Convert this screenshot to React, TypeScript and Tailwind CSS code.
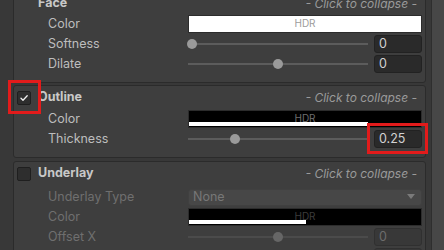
import React from "react";

type Tone = "on" | "off";

function Slider({ pos, tone = "on" }: { pos: number; tone?: Tone }) {
  return (
    <div className="relative w-[180px] h-full flex items-center">
      <div className={`w-full h-[2px] ${tone === "on" ? "bg-[#5c5c5c]" : "bg-[#4b4b4b]"}`} />
      <div
        className={`absolute w-[10px] h-[10px] rounded-full ${tone === "on" ? "bg-[#9a9a9a]" : "bg-[#666666]"}`}
        style={{ left: pos - 5 }}
      />
    </div>
  );
}

function NumberBox({ value, tone = "on" }: { value: string; tone?: Tone }) {
  return (
    <div
      className={`w-[48px] h-[18px] rounded-[3px] border flex items-center pl-[4px] text-[12.5px] ${
        tone === "on"
          ? "bg-[#2a2a2a] border-[#222222] text-[#d2d2d2]"
          : "bg-[#383838] border-[#303030] text-[#6c6c6c]"
      }`}
    >
      {value}
    </div>
  );
}

function ColorField({ fill, bar, tone = "on" }: { fill: "white" | "black"; bar: number; tone?: Tone }) {
  return (
    <div
      className={`relative w-[234px] h-[18px] border border-[#2c2c2c] flex items-center justify-center ${
        fill === "white" ? "bg-white" : "bg-black"
      }`}
    >
      <span
        className={`text-[10px] leading-none mb-[2px] ${
          fill === "white" ? "text-[#9c9c9c]" : tone === "on" ? "text-[#6e6e6e]" : "text-[#3c3c3c]"
        }`}
      >
        HDR
      </span>
      <div className="absolute left-0 bottom-[1px] h-[4px] bg-white" style={{ width: bar }} />
    </div>
  );
}

function Row({ label, tone = "on", children }: { label: string; tone?: Tone; children: React.ReactNode }) {
  return (
    <div className="h-5 flex items-center">
      <div className={`w-[174px] shrink-0 pl-[34px] text-[12.5px] ${tone === "on" ? "text-[#bdbdbd]" : "text-[#6f6f6f]"}`}>
        {label}
      </div>
      <div className="flex-1 h-full flex items-center justify-between pr-[3px]">{children}</div>
    </div>
  );
}

function Checkbox({ checked }: { checked?: boolean }) {
  return (
    <div className="w-[14px] h-[14px] rounded-[2px] bg-[#2e2e2e] border border-[#1f1f1f] flex items-center justify-center">
      {checked && (
        <svg width="10" height="10" viewBox="0 0 10 10">
          <path d="M2 5.2 L4 7.2 L8.2 2.8" fill="none" stroke="#f0f0f0" strokeWidth="1.3" strokeLinecap="round" strokeLinejoin="round" />
        </svg>
      )}
    </div>
  );
}

function Header({ title, box, checked }: { title: string; box?: boolean; checked?: boolean }) {
  return (
    <div className="h-[21px] flex items-center pl-[3px] pr-[8px]">
      <div className="w-[14px]">{box && <Checkbox checked={checked} />}</div>
      <div className="ml-[7px] font-bold text-[12.5px] text-[#c8c8c8]">{title}</div>
      <div className="ml-auto italic text-[12px] text-[#9a9a9a]">- Click to collapse -</div>
    </div>
  );
}

function Section({ className = "", children }: { className?: string; children: React.ReactNode }) {
  return (
    <div className={`border border-[#2b2b2b] rounded-[3px] bg-[#3e3e3e] pt-[1px] pb-2 ${className}`}>{children}</div>
  );
}

export default function App() {
  return (
    <div
      className="relative w-[444px] h-[250px] overflow-hidden bg-[#383838] flex"
      style={{ fontFamily: "Inter, 'Liberation Sans', sans-serif" }}
    >
      {/* left gutter */}
      <div className="w-[13px] shrink-0" />

      {/* sections */}
      <div className="w-[413px] shrink-0 flex flex-col">
        <Section className="-mt-[9px] rounded-t-none">
          <Header title="Face" />
          <Row label="Color">
            <ColorField fill="white" bar={232} />
          </Row>
          <Row label="Softness">
            <Slider pos={4} />
            <NumberBox value="0" />
          </Row>
          <Row label="Dilate">
            <Slider pos={90} />
            <NumberBox value="0" />
          </Row>
        </Section>

        <Section className="mt-[2px]">
          <Header title="Outline" box checked />
          <div className="h-[1px]" />
          <Row label="Color">
            <ColorField fill="black" bar={179} />
          </Row>
          <Row label="Thickness">
            <Slider pos={47} />
            <NumberBox value="0.25" />
          </Row>
        </Section>

        <Section className="mt-[3px]">
          <Header title="Underlay" box />
          <div className="h-[3px]" />
          <Row label="Underlay Type" tone="off">
            <div className="w-[234px] h-[17px] rounded-[3px] bg-[#474747] border border-[#404040] flex items-center pl-[4px] pr-[6px] text-[12.5px] text-[#777777]">
              None
              <svg className="ml-auto" width="8" height="6" viewBox="0 0 8 6">
                <path d="M0 0 H8 L4 5 Z" fill="#7a7a7a" />
              </svg>
            </div>
          </Row>
          <Row label="Color" tone="off">
            <ColorField fill="black" bar={117} tone="off" />
          </Row>
          <Row label="Offset X" tone="off">
            <Slider pos={90} tone="off" />
            <NumberBox value="0" tone="off" />
          </Row>
          <Row label="Offset Y" tone="off">
            <Slider pos={90} tone="off" />
            <NumberBox value="0" tone="off" />
          </Row>
        </Section>
      </div>

      {/* scrollbar */}
      <div className="w-[5px] shrink-0" />
      <div className="w-[1px] shrink-0 bg-[#2e2e2e]" />
      <div className="flex-1 bg-[#474747]" />

      {/* highlight boxes */}
      <div className="absolute left-[8px] top-[80px] w-[33px] h-[34px] border-[3px] border-[#e21b1b]" />
      <div className="absolute left-[367px] top-[123px] w-[61px] h-[31px] border-[3px] border-[#e21b1b]" />
    </div>
  );
}
